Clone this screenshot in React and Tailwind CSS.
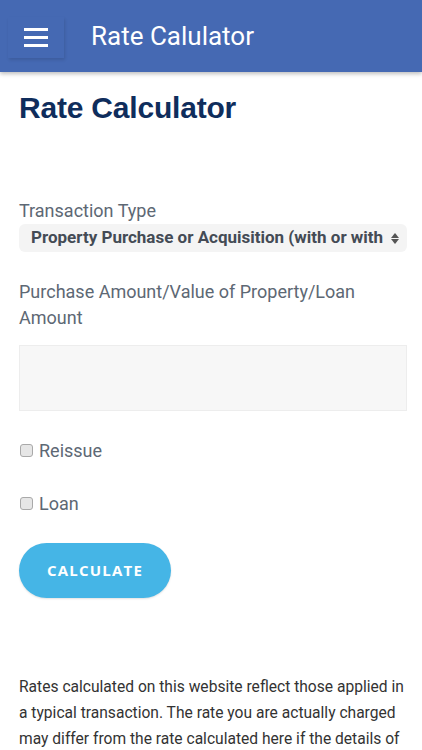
import { useState } from "react";

function App() {
    const [reissue, setReissue] = useState(false);
    const [loan, setLoan] = useState(false);

  return (
    <div className="min-h-screen bg-white font-['Roboto',sans-serif]">
        <header className="h-[72px] bg-[#4569b3] flex items-center shadow-[0_2px_4px_rgba(0,0,0,0.25)]">
            <button className="ml-[8px] mt-[2px] w-[56px] h-[41px] flex flex-col justify-center items-center gap-[5px] shadow-[1px_2px_3px_rgba(0,0,0,0.12)]">
                <span className="block w-[24px] h-[3px] bg-white"></span>
                <span className="block w-[24px] h-[3px] bg-white"></span>
                <span className="block w-[24px] h-[3px] bg-white"></span>
            </button>
            <span className="ml-[27px] text-white text-[26px] leading-none">Rate Calulator</span>
        </header>

        <main className="pl-[19px] pr-[15px]">
            <h1 className="mt-[20px] font-['Liberation_Sans',Arial,sans-serif] font-bold text-[30px] leading-[32px] text-[#0f2d5c] tracking-[-0.2px]">Rate Calculator</h1>

            <label className="block mt-[76px] text-[18px] leading-[22px] text-[#5d6874]">Transaction Type</label>
            <div className="mt-[2px] h-[28px] rounded-[6px] bg-[#f4f4f4] flex items-center pl-[12px] pr-[8px] overflow-hidden">
                <span className="flex-1 whitespace-nowrap overflow-hidden text-[17px] font-bold text-[#444b55]">Property Purchase or Acquisition (with or with</span>
                <span className="flex flex-col items-center ml-[2px] gap-[1px]">
                    <svg width="8" height="5" viewBox="0 0 8 5"><path d="M0 5 L4 0 L8 5 Z" fill="#555" /></svg>
                    <svg width="8" height="5" viewBox="0 0 8 5"><path d="M0 0 L4 5 L8 0 Z" fill="#555" /></svg>
                </span>
            </div>

            <label className="block mt-[27px] text-[18px] leading-[26px] text-[#5d6874]">Purchase Amount/Value of Property/Loan Amount</label>
            <input type="text" className="block mt-[14px] w-full h-[66px] bg-[#f7f7f7] border border-[#ededed] outline-none" />

            <label className="mt-[27px] h-[24px] flex items-center gap-[6px] text-[18px] text-[#5d6874]">
                <input type="checkbox" checked={reissue} onChange={(e) => setReissue(e.target.checked)} className="appearance-none ml-[1px] w-[13px] h-[13px] rounded-[3px] border border-[#a9a9a9] bg-[#e6e6e6] checked:bg-[#45b5e6]" />
                Reissue
            </label>
            <label className="mt-[29px] h-[24px] flex items-center gap-[6px] text-[18px] text-[#5d6874]">
                <input type="checkbox" checked={loan} onChange={(e) => setLoan(e.target.checked)} className="appearance-none ml-[1px] w-[13px] h-[13px] rounded-[3px] border border-[#a9a9a9] bg-[#e6e6e6] checked:bg-[#45b5e6]" />
                Loan
            </label>

            <button className="block mt-[28px] w-[152px] h-[55px] rounded-full bg-[#45b5e6] text-white font-bold text-[15px] tracking-[1.2px] font-['Open_Sans',sans-serif] shadow-[0_1px_2px_rgba(0,0,0,0.12)]">
                CALCULATE
            </button>

            <p className="mt-[76px] text-[15.6px] leading-[26px] text-[#333]">
                Rates calculated on this website reflect those applied in a typical transaction. The rate you are actually charged may differ from the rate calculated here if the details of your transaction differ from those you entered.
            </p>
        </main>
    </div>
  )
}

export default App
